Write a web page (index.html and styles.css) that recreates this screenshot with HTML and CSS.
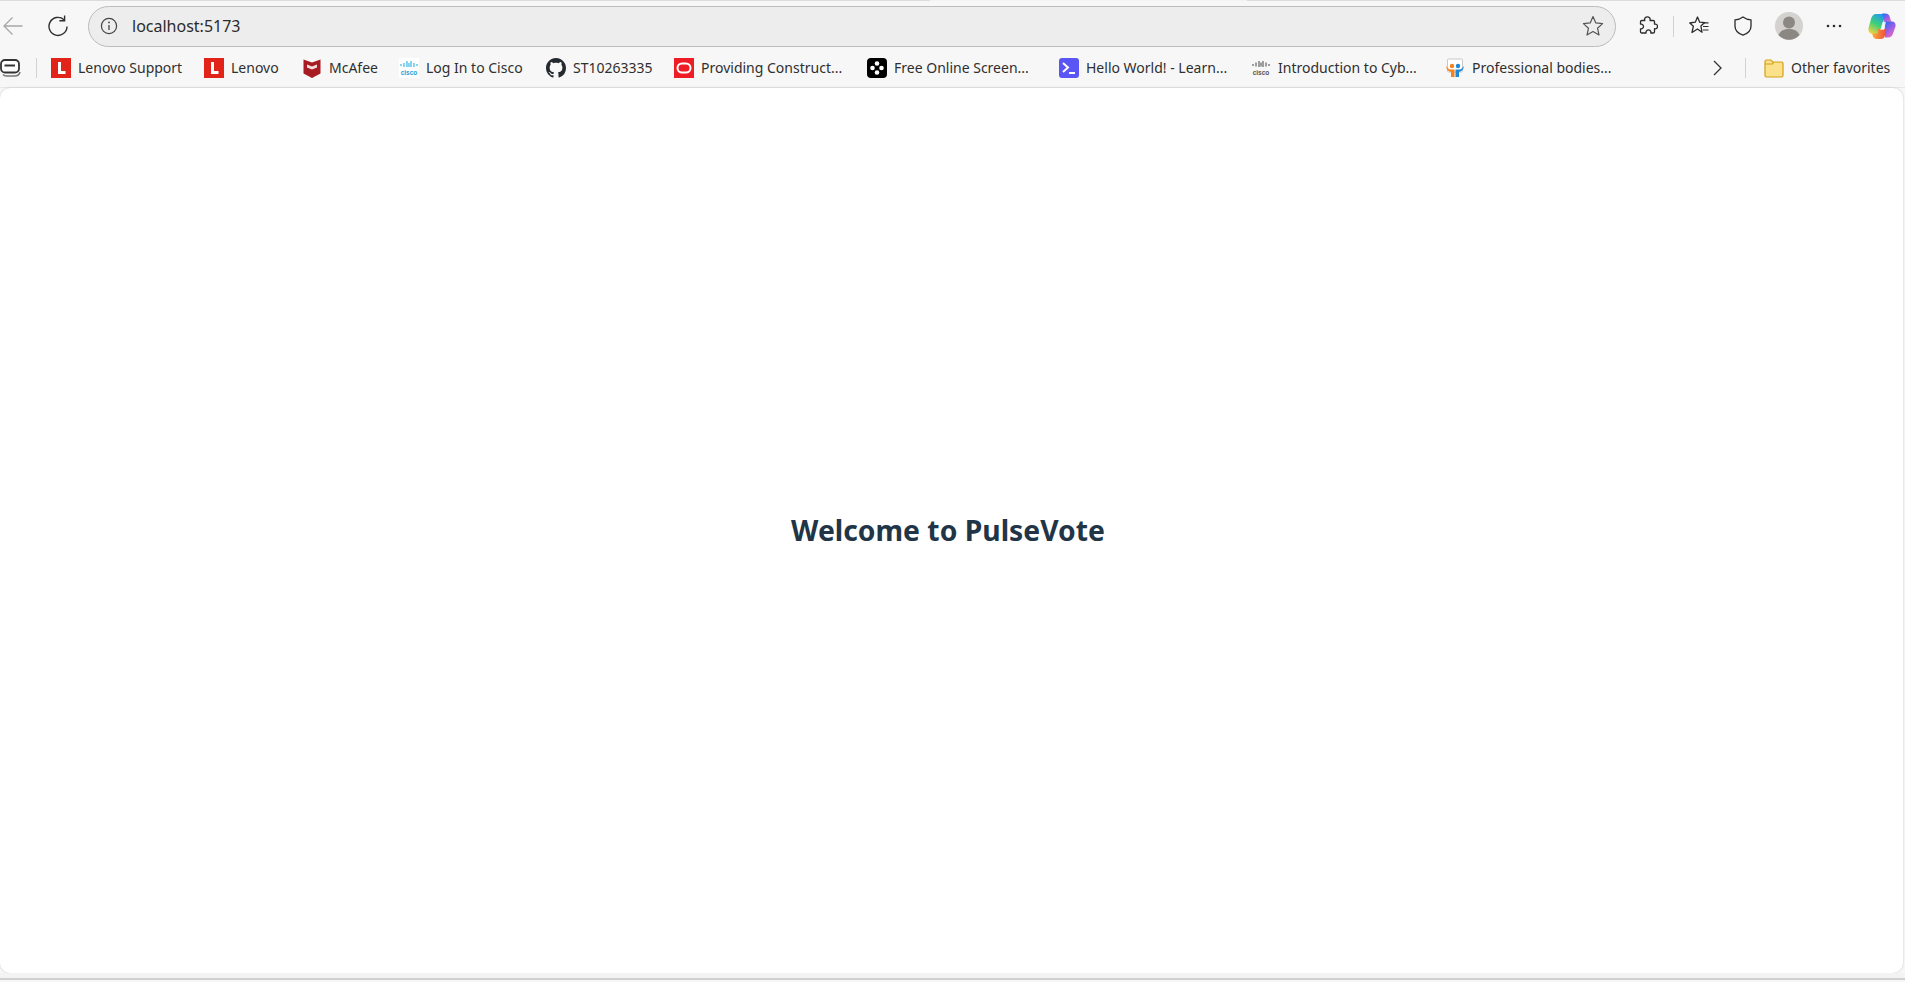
FILE: index.html
```html
<!DOCTYPE html>
<html lang="en">
<head>
<meta charset="utf-8">
<title>PulseVote</title>
<link rel="stylesheet" href="styles.css">
</head>
<body>
<div class="browser">
  <div class="tabedge"><span class="seg-a"></span><span class="seg-b"></span><span class="seg-a grow"></span></div>
  <header class="toolbar">
    <svg class="ic back" viewBox="0 0 20 20"><path d="M19.5 10H1M9.500 1.500 1 10l8.500 8.500" fill="none" stroke="#a8a8a8" stroke-width="1.300"/></svg>
    <svg class="ic reload" viewBox="0 0 20 22"><path d="M16 4.200A9 9 0 1 0 19 11" fill="none" stroke="#2e2e2e" stroke-width="1.400"/><path d="M16.600 0v5.200h-5.200" fill="none" stroke="#2e2e2e" stroke-width="1.400"/></svg>
    <div class="address">
      <svg class="ic info" viewBox="0 0 18 18"><circle cx="9" cy="9" r="7.600" fill="none" stroke="#444" stroke-width="1.200"/><path d="M9 8v5" stroke="#444" stroke-width="1.300"/><circle cx="9" cy="5.400" r=".9" fill="#444"/></svg>
      <span class="url">localhost:5173</span>
      <svg class="ic star" viewBox="0 0 22 22"><path d="M11 1.600l2.800 6.300 6.800.7-5.100 4.600 1.500 6.800L11 16.600l-6 3.400 1.500-6.800L1.400 8.600l6.800-.7z" fill="none" stroke="#555" stroke-width="1.200" stroke-linejoin="round"/></svg>
    </div>
    <div class="tools">
      <svg class="ic puzzle" viewBox="0 0 20 20"><path d="M6.800 4.500C6 2 7.800.8 9.400.8s3.300 1.200 2.600 3.700h3.200c.8 0 1.300.5 1.300 1.300v2.400c2-.6 3 1 3 2.200s-1 2.900-3 2.300v3c0 .8-.5 1.300-1.300 1.300h-2.400c.5-2-1-3.100-2.300-3.100s-2.900 1.100-2.400 3.100H3.800c-.8 0-1.300-.5-1.300-1.300v-2.900c1.800.4 3-.9 3-2.300S4.300 7.700 2.500 8.200V5.800c0-.8.500-1.300 1.300-1.300z" fill="none" stroke="#2c2c2c" stroke-width="1.300" stroke-linejoin="round"/></svg>
      <span class="vsep"></span>
      <svg class="ic fav" viewBox="0 0 20 20"><path d="M8.500 1l2.200 5.200 5 .4-3.800 3.400 1.100 6.200-4.500-3.200-5.500 3.500 1.400-6.300L.8 7l5.500-.8z" fill="none" stroke="#2c2c2c" stroke-width="1.300" stroke-linejoin="round"/><path d="M13.500 6.800h6M14 10.500h5.500M14 14h5.500" stroke="#2c2c2c" stroke-width="1.200"/></svg>
      <svg class="ic shield" viewBox="0 0 18 20"><path d="M9 1c2.400 1.800 5 2.700 8 2.800V10c0 4.500-3 7.500-8 9.200C4 17.500 1 14.500 1 10V3.800C4 3.700 6.600 2.800 9 1z" fill="none" stroke="#2c2c2c" stroke-width="1.300" stroke-linejoin="round"/></svg>
      <svg class="ic avatar" viewBox="0 0 28 28"><circle cx="14" cy="14" r="14" fill="#d3d2cf"/><circle cx="14" cy="10.500" r="6" fill="#8b8884"/><path d="M3.500 23c2-4.500 6-6 10.500-6s8.500 1.500 10.500 6a14 14 0 0 1-21 0z" fill="#8b8884"/></svg>
      <svg class="ic dots" viewBox="0 0 16 4"><circle cx="2" cy="2" r="1.300" fill="#2c2c2c"/><circle cx="8" cy="2" r="1.300" fill="#2c2c2c"/><circle cx="14" cy="2" r="1.300" fill="#2c2c2c"/></svg>
      <svg class="ic copilot" viewBox="0 0 28 26">
        <defs>
          <linearGradient id="cpa" x1=".7" y1="0" x2=".2" y2="1"><stop offset="0" stop-color="#1f9bf0"/><stop offset=".5" stop-color="#3dd07a"/><stop offset="1" stop-color="#f6d33c"/></linearGradient>
          <linearGradient id="cpb" x1=".2" y1="0" x2=".8" y2="1"><stop offset="0" stop-color="#2f6df0"/><stop offset=".5" stop-color="#a05ee8"/><stop offset="1" stop-color="#f56fb0"/></linearGradient>
          <linearGradient id="cpc" x1="0" y1="0" x2="1" y2="0"><stop offset="0" stop-color="#f8b13a"/><stop offset="1" stop-color="#ee4a3a"/></linearGradient>
        </defs>
        <path d="M8 1h9.500l-5.500 20H5c-3 0-5.200-2.500-4.500-6L3 6C3.800 3 5.500 1 8 1z" fill="url(#cpa)"/>
        <path d="M14 .5h3.500c2.500 0 3.700 1.500 4.300 3.500l2 6.500H17z" fill="url(#cpb)"/>
        <path d="M16.500 8.500H24c2.800 0 4 2.500 3.500 5l-2.500 7c-.7 2.500-2.500 4-5 4h-3z" fill="url(#cpb)"/>
        <path d="M10 16h8.500l-1.500 6.500c-.5 2-2 3.500-4 3.500H9c-2.300 0-3.800-1.500-4.300-3.500L4 20.500h6z" fill="url(#cpc)"/>
        <path d="M14.500 9h3.500l-2.200 8h-3.500z" fill="#fff" opacity=".75"/>
      </svg>
    </div>
  </header>
  <nav class="bookmarks">
    <div class="bm-lead">
      <svg class="ic stack" viewBox="0 0 21 18"><rect x="1" y="1" width="18" height="12.500" rx="4" fill="#fff" stroke="#333" stroke-width="1.800"/><path d="M4.500 6.500h10.500" stroke="#333" stroke-width="2"/><path d="M3 15.500c1 1.300 2 1.500 3.500 1.500h8c2.500 0 5-1.500 5.500-4" fill="none" stroke="#777" stroke-width="1.500"/></svg>
      <span class="vsep bar"></span>
    </div>
    <div class="bm-grid">
      <a class="bm"><svg class="fav-ic" viewBox="0 0 20 20"><rect width="20" height="20" fill="#e2231a"/><path d="M7 4h3v9h4.500v3H7z" fill="#fff"/></svg><span>Lenovo Support</span></a>
      <a class="bm"><svg class="fav-ic" viewBox="0 0 20 20"><rect width="20" height="20" fill="#e2231a"/><path d="M7 4h3v9h4.500v3H7z" fill="#fff"/></svg><span>Lenovo</span></a>
      <a class="bm"><svg class="fav-ic" viewBox="0 0 20 20"><path d="M1.500 1.500l8.500 3 8.500-3v14L10 20l-8.500-4.500z" fill="#a71c22"/><path d="M5 6.500l5 2 5-2v3l-5 2-5-2z" fill="#fff" opacity=".85"/></svg><span>McAfee</span></a>
      <a class="bm"><svg class="fav-ic" viewBox="0 0 20 20"><rect width="20" height="20" fill="#fff"/><path d="M2 6v2M5 5v4M8 3v6M10 5v4M12 3v6M15 5v4M18 6v2" stroke="#29b2e3" stroke-width="1.100"/><text class="logo-text logo-cisco" x="10" y="16.500">cisco</text></svg><span>Log In to Cisco</span></a>
      <a class="bm"><svg class="fav-ic" viewBox="0 0 16 16"><path fill="#24292f" d="M8 0C3.580 0 0 3.580 0 8c0 3.540 2.290 6.530 5.470 7.590.4.070.55-.17.55-.38 0-.19-.01-.82-.01-1.490-2.010.37-2.530-.49-2.690-.94-.09-.23-.48-.94-.82-1.130-.28-.15-.68-.52-.01-.53.630-.01 1.080.58 1.230.82.720 1.210 1.870.87 2.330.66.070-.52.280-.87.510-1.070-1.780-.2-3.640-.89-3.640-3.950 0-.87.310-1.590.820-2.150-.08-.2-.36-1.020.08-2.120 0 0 .67-.21 2.200.82.640-.18 1.320-.27 2-.27s1.360.09 2 .27c1.530-1.040 2.200-.82 2.200-.82.440 1.100.16 1.920.08 2.120.51.560.82 1.270.82 2.150 0 3.070-1.870 3.750-3.650 3.950.29.250.54.730.54 1.480 0 1.070-.01 1.930-.01 2.200 0 .21.150.46.550.38A8.010 8.010 0 0 0 16 8c0-4.420-3.580-8-8-8z"/></svg><span>ST10263335</span></a>
      <a class="bm"><svg class="fav-ic" viewBox="0 0 20 20"><rect width="20" height="20" fill="#ee1c25"/><rect x="3.500" y="5.500" width="13" height="9" rx="4.500" fill="none" stroke="#fff" stroke-width="2"/></svg><span>Providing Construct...</span></a>
      <a class="bm"><svg class="fav-ic" viewBox="0 0 20 20"><rect width="20" height="20" rx="4" fill="#000"/><circle cx="10" cy="5.500" r="2.300" fill="#fff"/><circle cx="5.500" cy="10" r="2.300" fill="#fff"/><circle cx="14.500" cy="10" r="2.300" fill="#fff"/><circle cx="10" cy="14.500" r="2.300" fill="#fff"/></svg><span>Free Online Screen...</span></a>
      <a class="bm"><svg class="fav-ic" viewBox="0 0 20 20"><rect width="20" height="20" rx="3" fill="#5a55f5"/><path d="M4 5l5 4.500L4 14" fill="none" stroke="#fff" stroke-width="2"/><path d="M10 15h6" stroke="#fff" stroke-width="2"/></svg><span>Hello World! - Learn...</span></a>
      <a class="bm"><svg class="fav-ic" viewBox="0 0 20 20"><path d="M2 6v2M5 4.500v4M8 3v6M10 4.500v4M12 3v6M15 4.500v4M18 6v2" stroke="#555" stroke-width="1.100"/><text class="logo-text logo-gray" x="10" y="16.500">cisco</text></svg><span>Introduction to Cyb...</span></a>
      <a class="bm"><svg class="fav-ic" viewBox="0 0 20 20"><rect x="2.500" y="1" width="15" height="13" rx="1" fill="#fff" stroke="#c8c8c8"/><circle cx="7" cy="8" r="2.200" fill="#f58220"/><circle cx="13" cy="8" r="2.200" fill="#1e88d8"/><path d="M1 8c2 3 4 3.500 5 3.500h3.500V19H6v-5C3 13.500 1.500 11 1 8z" fill="#f58220"/><path d="M19 8c-2 3-4 3.500-5 3.500h-3.500V19H14v-5c3-.5 4.500-3 5-6z" fill="#1e88d8"/></svg><span>Professional bodies...</span></a>
    </div>
    <svg class="ic chevron" viewBox="0 0 9 16"><path d="M1 1l7 7-7 7" fill="none" stroke="#333" stroke-width="1.300"/></svg>
    <span class="vsep bar"></span>
    <a class="bm other"><svg class="fav-ic" viewBox="0 0 20 20"><path d="M1 3.500A1.500 1.500 0 0 1 2.500 2h4.300L9 4h8.500A1.500 1.500 0 0 1 19 5.500v12a1.500 1.500 0 0 1-1.500 1.500h-15A1.500 1.500 0 0 1 1 17.500z" fill="#fbe28a" stroke="#d49f18" stroke-width="1.200"/><path d="M1 6h7.500L9.500 4" fill="none" stroke="#d49f18" stroke-width="1.200"/></svg><span>Other favorites</span></a>
  </nav>
  <main class="viewport">
    <h1 class="welcome">Welcome to PulseVote</h1>
  </main>
  <div class="bottomline"></div>
</div>
</body>
</html>
```
FILE: styles.css
```css
* { box-sizing: border-box; }
html, body { margin: 0; height: 100%; }
body { overflow: hidden; background: #f7f7f7; font-family: "Noto Sans", "Open Sans", "Liberation Sans", sans-serif; color: #2a2a2a; }
.browser { display: flex; flex-direction: column; height: 982px; background: #f7f7f7; }
.ic, .fav-ic { display: block; flex: none; }

.tabedge { display: flex; height: 1px; flex: none; }
.seg-a { width: 930px; background: #dcdcdc; }
.seg-b { width: 317px; background: #f3f3f3; }
.grow { flex: 1; width: auto; }

.toolbar { display: flex; align-items: center; height: 50px; flex: none; padding-left: 3px; }
.back { width: 20px; height: 20px; }
.reload { width: 20px; height: 23px; margin-left: 25px; }
.address { display: flex; align-items: center; width: 1528px; height: 41px; margin-left: 20px; padding: 0 11px; background: #ededed; border: 1px solid #bcbcbc; border-radius: 21px; }
.info { width: 18px; height: 18px; }
.url { margin-left: 14px; flex: 1; font-size: 16px; line-height: 20px; color: #2b2b2b; }
.star { width: 22px; height: 22px; }
.tools { display: flex; align-items: center; margin-left: 22px; }
.puzzle { width: 20px; height: 20px; }
.tools .vsep { margin-left: 15px; height: 21px; }
.vsep { display: block; width: 1px; flex: none; background: #d3d3d3; }
.fav { width: 20px; height: 20px; margin-left: 15px; }
.shield { width: 18px; height: 20px; margin-left: 25px; }
.avatar { width: 28px; height: 28px; margin-left: 23px; }
.dots { width: 16px; height: 4px; margin-left: 23px; }
.copilot { width: 28px; height: 26px; margin-left: 26px; }

.bookmarks { display: flex; align-items: center; height: 37px; flex: none; padding-bottom: 3px; border-bottom: 1px solid #e8e8e8; }
.bm-lead { display: flex; align-items: center; width: 51px; flex: none; }
.stack { width: 21px; height: 18px; }
.bm-lead .bar { margin-left: 15px; }
.bar { height: 20px; }
.bm-grid { display: grid; grid-template-columns: 153px 98px 97px 147px 128px 193px 192px 192px 194px 175px; flex: none; }
.bm { display: flex; align-items: center; gap: 7px; font-size: 14px; line-height: 20px; color: #2f2f2f; white-space: nowrap; min-width: 0; }
.fav-ic { width: 20px; height: 20px; }
.logo-text { font-family: "Liberation Sans", sans-serif; font-size: 6.500px; font-weight: 700; text-anchor: middle; }
.logo-cisco { fill: #1aa3d6; }
.logo-gray { fill: #555; }
.chevron { width: 9px; height: 16px; margin-left: 93px; }
.bookmarks > .bar { margin-left: 23px; }
.other { margin-left: 18px; }

.viewport { flex: 1; display: flex; align-items: center; justify-content: center; background: #fff; border-radius: 10px; margin-right: 2px; box-shadow: 0 0 2px rgba(0,0,0,.22); padding: 0 7px 2px 0; }
.welcome { margin: 0; font-size: 28.300px; line-height: 38px; font-weight: 700; color: #213547; }
.bottomline { height: 9px; flex: none; background: #f3f3f3; border-bottom: 2px solid #f7f7f7; box-shadow: inset 0 -2px 0 #cfcfcf; }
```
